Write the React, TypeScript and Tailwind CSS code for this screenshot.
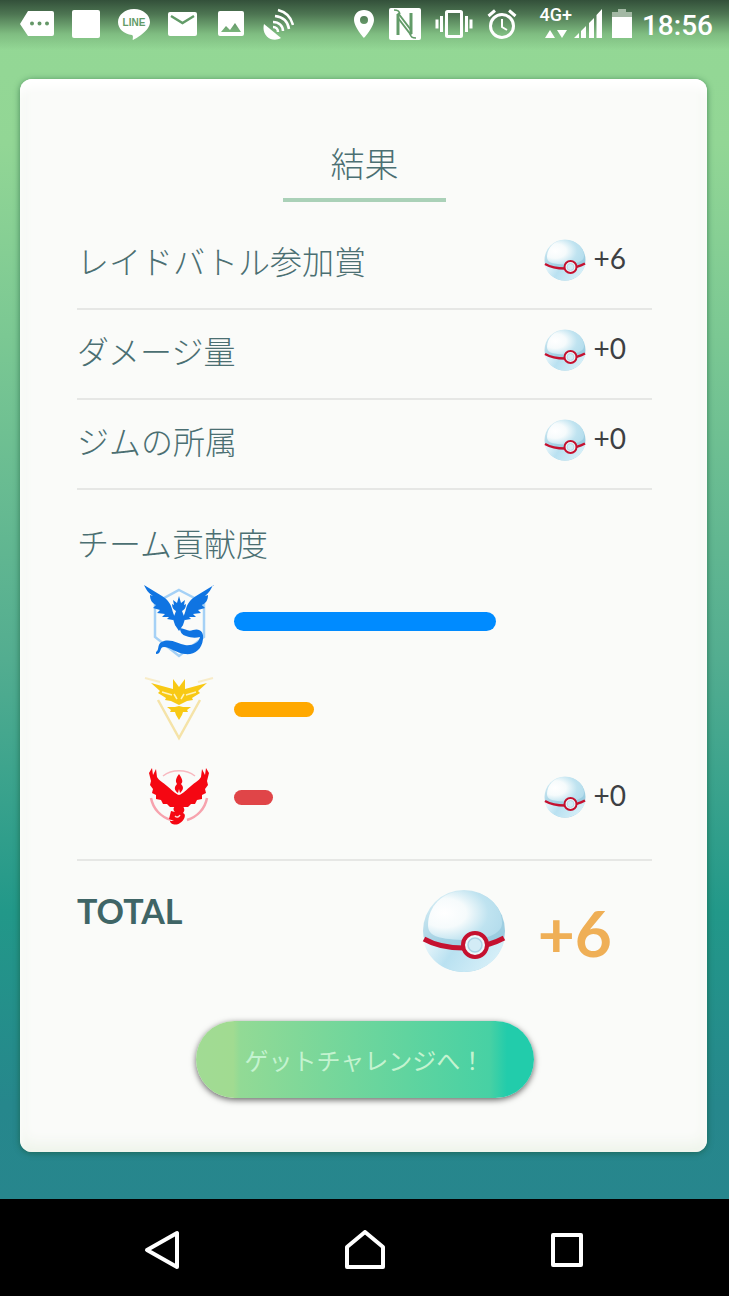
import React, { useId } from "react";

const JP = "font-['Noto_Sans_CJK_JP',sans-serif]";

const PremierBall = ({ className }: { className: string }) => {
  const id = useId();
  return (
    <svg viewBox="0 0 84 84" className={className} aria-hidden="true">
      <defs>
        <linearGradient id={`${id}rim`} x1="0.2" y1="0" x2="0.7" y2="1">
          <stop offset="0" stopColor="#d9eff6" />
          <stop offset="0.5" stopColor="#a5d2e4" />
          <stop offset="1" stopColor="#8fc6dc" />
        </linearGradient>
        <radialGradient id={`${id}top`} cx="0.22" cy="0.45" r="0.85">
          <stop offset="0" stopColor="#ffffff" />
          <stop offset="0.35" stopColor="#f6fbfc" />
          <stop offset="0.7" stopColor="#bfe3f0" />
          <stop offset="1" stopColor="#b3dcec" />
        </radialGradient>
        <linearGradient id={`${id}low`} x1="0" y1="0" x2="1" y2="0.3">
          <stop offset="0" stopColor="#f4fbfd" />
          <stop offset="0.45" stopColor="#b9e1f1" />
          <stop offset="1" stopColor="#d6eff8" />
        </linearGradient>
      </defs>
      <circle cx="42" cy="42" r="41" fill={`url(#${id}rim)`} />
      <path
        d="M42 2C20 2 6 18 6 36c0 10 8 14 34 15 24 0 40-6 40-17C80 16 64 2 42 2z"
        fill={`url(#${id}top)`}
      />
      <path
        d="M1 48c12 8 30 11 46 10 14-1 26-5 36-11C81 67 64 83 42 83S3 68 1 48z"
        fill={`url(#${id}low)`}
      />
      <path d="M2 50c14 8 28 9.500 44 9 14-1 26-4.500 36-10" fill="none" stroke="#c5112f" strokeWidth="5" />
      <circle cx="53" cy="56" r="12" fill="#eef8fb" stroke="#c5112f" strokeWidth="4" />
      <circle cx="53" cy="56" r="7" fill="#d3ecf6" stroke="#a9d2e4" strokeWidth="1.500" />
    </svg>
  );
};

const MysticLogo = () => (
  <svg viewBox="0 0 72 76" className="h-[76px] w-[72px]" aria-hidden="true">
    <path d="M36 7l25 13v34L36 73 12 54V20z" fill="none" stroke="#a5d1f6" strokeWidth="2.500" />
    <g fill="#0f74e2">
      <path d="M1 2l18 11c5 3 9 8 10 13 1 4 2 7 4 9l-3 2-6-1 2-2-7 0 3-3-8-1 3-3-7-2 3-3c-4-2-6-5-6-10l3 1C5 10 3 6 1 2z" />
      <path d="M71 2L53 13c-5 3-9 8-10 13-1 4-2 7-4 9l3 2 6-1-2-2 7 0-3-3 8-1-3-3 7-2-3-3c4-2 6-5 6-10l-3 1c4-3 6-7 8-11z" />
      <path d="M36 13l2 7 4-3-1 5 2-1c0 4-2 6-4 7l3 8-2 6-4 2-4-2-2-6 3-8c-2-1-4-3-4-7l2 1-1-5 4 3z" />
      <path d="M37 45c6 1 8 4 13 2 7-2 11 2 10 9-1 11-9 16-18 15-9-1-15-7-21-7-5 0-2 7-8 7l0-2c4-2 0-9 8-11 8-2 15 3 21 4 7 1 14-2 15-8-4 1-9 1-14-1-4-1-6-4-6-8z" />
      <path d="M32 42h8l-4 6z" />
    </g>
  </svg>
);

const InstinctLogo = () => (
  <svg viewBox="0 0 72 66" className="h-[66px] w-[72px]" aria-hidden="true">
    <path d="M15 24l21 38 21-38" fill="none" stroke="#f5e3a8" strokeWidth="2.500" />
    <path d="M2 2l15 4M70 2L55 6" fill="none" stroke="#f8ecc8" strokeWidth="2" />
    <g fill="#f8c914">
      <path d="M8 7l22 6 0-10 6 8 6-8 0 10 22-6-9 8 2 2-8 5 1 2-6 1-8 4-8-4-6-1 1-2-8-5 2-2z" />
      <path d="M36 30l4 1 8 0-4 3 1 2-5 0-1 3-3 5-3-5-1-3-5 0 1-2-4-3 8 0z" />
    </g>
    <path d="M31 18l3 5M41 18l-3 5M19 16l10 3M53 16l-10 3" stroke="#fff3b8" strokeWidth="1.500" />
  </svg>
);

const ValorLogo = () => (
  <svg viewBox="0 0 60 60" className="h-[60px] w-[60px]" aria-hidden="true">
    <path d="M14 9C23 2 37 2 46 9" fill="none" stroke="#f8b9c0" strokeWidth="1.500" />
    <path d="M2 31c2 11 10 19 20 22M58 31c-2 11-10 19-20 22" fill="none" stroke="#f7a3ae" strokeWidth="2.500" />
    <g fill="#f50712">
      <path d="M3 1l1 7 3-6 1 8c2 4 6 5 10 9 4 3 8 8 12 9 4-1 8-6 12-9 4-4 8-5 10-9l1-8 3 6 1-7 3 5-2 8 1 4-3 4 1 4-4 2 0 4-5 1-2 4-4 0-3 3-4 0-5 3-5-3-4 0-3-3-4 0-2-4-5-1 0-4-4-2 1-4-3-4 1-4-2-8z" />
      <path d="M30 7c4 6 4 8 2 10 4 4 1 7-1 9l-1-4-1 4c-4-3-4-6-1-9-2-3-1-6 2-10z" />
      <path d="M29 38c6 0 8 5 5 8 4 1 1 8-3 10-4 3-10 1-10-2l4 0-5-2 2-8 4 1c-3-3-1-6 3-7z" />
    </g>
    <path d="M26 49c2 2 4 1 5-1" fill="none" stroke="#ffd6d6" strokeWidth="1.500" />
  </svg>
);

const StatusBar = () => (
  <header className="flex h-12 items-center justify-between pl-5 pr-4 text-white">
    <div className="flex items-center gap-[18px]">
      <svg viewBox="0 0 34 30" className="h-[30px] w-[34px]" aria-hidden="true">
        <path
          fill="currentColor"
          fillRule="evenodd"
          d="M8 2h24q2 0 2 2v21q0 2-2 2H8L0 15zM10 14.500a2 2 0 1 0 4 0a2 2 0 1 0-4 0M17.500 14.500a2 2 0 1 0 4 0a2 2 0 1 0-4 0M25 14.500a2 2 0 1 0 4 0a2 2 0 1 0-4 0"
        />
      </svg>
      <span className="h-7 w-7 rounded-xs bg-white" />
      <svg viewBox="0 0 32 32" className="h-8 w-8" aria-hidden="true">
        <path
          fill="currentColor"
          d="M16 1c9 0 16 6 16 13 0 5-4 9-9 13-3 2-6 4-8 5-1 0 1-4-1-5C6 26 0 21 0 14 0 7 7 1 16 1z"
        />
        <text x="16" y="18" textAnchor="middle" fontSize="10" fontWeight="700" fontFamily="Liberation Sans" fill="#629b68">
          LINE
        </text>
      </svg>
      <svg viewBox="0 0 30 24" className="h-6 w-[30px]" aria-hidden="true">
        <rect width="29" height="24" rx="2" fill="currentColor" />
        <path d="M3 4l11.500 7L26 4" fill="none" stroke="#629b68" strokeWidth="2.500" />
      </svg>
      <svg viewBox="0 0 28 28" className="h-7 w-7" aria-hidden="true">
        <path
          fill="currentColor"
          fillRule="evenodd"
          d="M4 1h22q2 0 2 2v21q0 2-2 2H4q-2 0-2-2V3q0-2 2-2zM5 22h20l-6-9-5 7-4-4z"
        />
      </svg>
      <svg viewBox="0 0 32 34" className="h-[34px] w-8" aria-hidden="true">
        <path fill="currentColor" d="M2 17l17 14C10 36-1 29 2 17z" />
        <path
          d="M12 20c3 0 5 2 5 5M12 15c6 0 10 4 10 9M14 9c8 1 13 6 14 13M17 3c8 2 13 7 15 15"
          transform="translate(-1 0)"
          fill="none"
          stroke="currentColor"
          strokeWidth="2.500"
        />
      </svg>
    </div>

    <div className="flex items-center gap-[10px]">
      <div className="mr-3 flex items-center gap-[14px]">
        <svg viewBox="0 0 22 30" className="h-[30px] w-[22px]" aria-hidden="true">
          <path
            fill="currentColor"
            fillRule="evenodd"
            d="M11 1c6 0 10 4 10 10 0 7-10 18-10 18S1 18 1 11C1 5 5 1 11 1zM7 11a4 4 0 1 0 8 0a4 4 0 1 0-8 0"
          />
        </svg>
        <svg viewBox="0 0 32 32" className="h-8 w-8" aria-hidden="true">
          <rect width="32" height="32" rx="2" fill="currentColor" />
          <g fill="none" stroke="#629b68">
            <path d="M9 27V6M22 5v21" strokeWidth="3" />
            <path d="M9 5l13 17M9 10l13 17" strokeWidth="2" />
            <path d="M5 2c4 0 5 1 6 4M27 30c-4 0-5-1-6-4" strokeWidth="1.500" />
          </g>
        </svg>
        <svg viewBox="0 0 38 28" className="h-7 w-[38px]" fill="none" stroke="currentColor" aria-hidden="true">
          <rect x="11.500" y="1.500" width="15" height="25" rx="1" strokeWidth="3" />
          <path d="M6.500 6v16M31.500 6v16" strokeWidth="3" />
          <path d="M2 9.500v9M36 9.500v9" strokeWidth="3" />
        </svg>
        <svg viewBox="0 0 30 30" className="h-[30px] w-[30px]" fill="none" stroke="currentColor" aria-hidden="true">
          <circle cx="15" cy="17" r="11.500" strokeWidth="3" />
          <path d="M15 10v8l5 3" strokeWidth="2" />
          <path d="M1.500 7l6.500-5.500M28.500 7L22 1.500" strokeWidth="3" />
        </svg>
      </div>
      <div className="flex items-center gap-[2px]">
        <div className="flex flex-col items-center gap-1 pb-1">
          <span className="font-[Roboto] text-lg leading-5 font-medium">4G+</span>
          <svg viewBox="0 0 22 10" className="h-[10px] w-[22px]" fill="currentColor" aria-hidden="true">
            <path d="M0 9l5-8 5 8zM12 1h10l-5 8z" />
          </svg>
        </div>
        <svg viewBox="0 0 28 30" className="h-[30px] w-7" fill="currentColor" aria-hidden="true">
          <path d="M0 29l5-5v5zM7 29v-7l5-5v12zM15 29V14l5-5v20zM22.500 29V6L28 0v29z" />
        </svg>
      </div>
      <svg viewBox="0 0 20 30" className="h-[30px] w-5" aria-hidden="true">
        <path fill="#a3b8a4" d="M6 0h8v3h6v6H0V3h6z" />
        <path fill="currentColor" d="M0 8h20v21H0z" />
      </svg>
      <time className="pt-1 font-[Roboto] text-[28px] leading-8 font-medium">18:56</time>
    </div>
  </header>
);

const Reward = ({ amount }: { amount: number }) => (
  <div className="flex items-center gap-2">
    <PremierBall className="h-[42px] w-[42px]" />
    <span className="pb-1 font-[Lato] text-[28px] leading-8 text-[#3d4043]">+{amount}</span>
  </div>
);

const rewards = [
  { label: "レイドバトル参加賞", amount: 6 },
  { label: "ダメージ量", amount: 0 },
  { label: "ジムの所属", amount: 0 },
];

const teams = [
  { name: "mystic", logo: <MysticLogo />, bar: "h-[19px] bg-[#008bff]", width: 262 },
  { name: "instinct", logo: <InstinctLogo />, bar: "h-[15px] bg-[#ffa800]", width: 80 },
  { name: "valor", logo: <ValorLogo />, bar: "h-[15px] bg-[#e04548]", width: 39, amount: 0 },
];

const App = (): React.JSX.Element => {
  return (
    <div className="flex min-h-screen flex-col bg-black">
      <div className="flex-1 bg-[linear-gradient(to_bottom,#33503a_0px,#4d7552_14px,#7fbd81_34px,transparent_50px),linear-gradient(to_bottom,#94d895_0%,#92d695_12%,#7bc893_28%,#53ad90_55%,#229889_76%,#26878c_92%,#27868d_100%)] pb-[46px]">
        <StatusBar />

        {/* Result card */}
        <main className="mt-[31px] mr-[22px] ml-5 rounded-xl bg-[#fafbf9] pt-[61px] pr-[55px] pb-[54px] pl-[57px] text-[#4b6f72] shadow-[0_1px_6px_rgba(20,80,50,0.6),inset_0_8px_10px_#ffffff,inset_0_-8px_14px_#eef4ea]">
          <h1 className={`${JP} mx-auto mb-[18px] w-[163px] border-b-4 border-[#aad1b8] pb-3 text-center text-[34px] leading-[46px] font-light`}>
            結果
          </h1>

          <ul>
            {rewards.map((row) => (
              <li
                key={row.label}
                className="flex h-[90px] items-center justify-between border-b-2 border-[#e6e7e5] pr-[26px] pb-2"
              >
                <span className={`${JP} text-[32px] leading-[48px] font-light`}>{row.label}</span>
                <Reward amount={row.amount} />
              </li>
            ))}
          </ul>

          <section className="border-b-2 border-[#e6e7e5] pt-7 pb-[18px]">
            <h2 className={`${JP} mb-[11px] text-[32px] leading-[48px] font-light`}>チーム貢献度</h2>
            {teams.map((team) => (
              <div key={team.name} className="flex h-[88px] items-center pr-[26px] pl-[66px]">
                <div className="flex w-[72px] justify-center">{team.logo}</div>
                <div className="flex flex-1 pl-[19px]">
                  <div className={`${team.bar} rounded-full`} style={{ width: team.width }} />
                </div>
                {team.amount !== undefined && <Reward amount={team.amount} />}
              </div>
            ))}
          </section>

          <section className="flex items-start justify-between pt-7 pr-10 font-[Lato] font-bold">
            <h2 className="text-[34px] leading-[44px] text-[#3f6566]">TOTAL</h2>
            <div className="flex items-center gap-8">
              <PremierBall className="h-[84px] w-[84px]" />
              <span className="pt-1 text-[64px] leading-[80px] text-[#efaf56]">+6</span>
            </div>
          </section>

          <button
            type="button"
            className={`${JP} mx-auto mt-12 block h-[77px] w-[338px] rounded-full bg-[linear-gradient(to_right,#a1db94_0%,#a1db91_11%,#92da95_13%,#47d1a4_87%,#22ccab_92%,#22ccab_100%)] text-2xl font-normal text-[#c4f3d0] shadow-[0_2px_6px_rgba(0,0,0,0.6)]`}
          >
            ゲットチャレンジへ！
          </button>
        </main>
      </div>

      {/* Android navigation */}
      <nav className="flex h-[97px] items-center justify-between px-[142px] pt-1 text-white">
        <button type="button" aria-label="Back">
          <svg viewBox="0 0 40 40" className="h-10 w-10" fill="none" stroke="currentColor" strokeWidth="4" strokeLinejoin="round">
            <path d="M35 3v34L5 20z" />
          </svg>
        </button>
        <button type="button" aria-label="Home">
          <svg viewBox="0 0 40 40" className="h-10 w-10" fill="none" stroke="currentColor" strokeWidth="4" strokeLinejoin="round">
            <path d="M20 2L2 17v20h36V17z" />
          </svg>
        </button>
        <button type="button" aria-label="Recent apps">
          <svg viewBox="0 0 40 40" className="h-10 w-10" fill="none" stroke="currentColor" strokeWidth="4" strokeLinejoin="round">
            <path d="M6 5h28v30H6z" />
          </svg>
        </button>
      </nav>
    </div>
  );
};

export default App;
